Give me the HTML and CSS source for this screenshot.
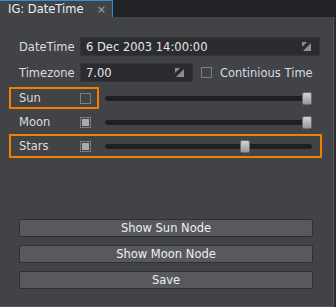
FILE: index.html
```html
<!DOCTYPE html>
<html lang="en">
<head>
  <meta charset="UTF-8">
  <title>IG: DateTime</title>
  <link rel="stylesheet" href="styles.css">
</head>
<body>

  <!-- TAB BAR -->
  <div class="tabbar">
    <div class="tab">
      <span class="tab-title">IG: DateTime</span>
      <span class="tab-close">&times;</span>
    </div>
  </div>

  <div class="panel">
    <div class="row">
      <span class="label">DateTime</span>
      <div class="field wide">
        <span>6 Dec 2003 14:00:00</span>
        <svg class="field-icon" width="9" height="9" viewBox="0 0 9 9">
          <polygon points="0,0 5,0 0,5" fill="#8d8e90"/>
          <polygon points="9,1 9,9 1,9" fill="#8d8e90"/>
        </svg>
      </div>
    </div>

    <div class="row gap-sm">
      <span class="label">Timezone</span>
      <div class="field narrow">
        <span>7.00</span>
        <svg class="field-icon" width="9" height="9" viewBox="0 0 9 9">
          <polygon points="0,0 5,0 0,5" fill="#8d8e90"/>
          <polygon points="9,1 9,9 1,9" fill="#8d8e90"/>
        </svg>
      </div>
      <span class="check"></span>
      <span class="check-text">Continious Time</span>
    </div>

    <div class="row slider-row">
      <div class="lead hl">
        <span class="label">Sun</span>
        <span class="check"></span>
      </div>
      <div class="track"><span class="thumb" style="left:calc(100% - 10px)"></span></div>
    </div>

    <div class="row slider-row">
      <div class="lead">
        <span class="label">Moon</span>
        <span class="check on"></span>
      </div>
      <div class="track"><span class="thumb" style="left:calc(100% - 10px)"></span></div>
    </div>

    <div class="row slider-row hl">
      <div class="lead">
        <span class="label">Stars</span>
        <span class="check on"></span>
      </div>
      <div class="track"><span class="thumb" style="left:135px"></span></div>
    </div>

    <div class="buttons">
      <button class="btn">Show Sun Node</button>
      <button class="btn">Show Moon Node</button>
      <button class="btn">Save</button>
    </div>
  </div>

</body>
</html>
```

FILE: styles.css
```css
* { box-sizing: border-box; }
body {
  margin: 0;
  width: 336px;
  height: 307px;
  background: #2c2d30;
  font-family: "DejaVu Sans", sans-serif;
  font-size: 11.5px;
  color: #dcdcde;
  overflow: hidden;
}

/* tab bar */
.tabbar {
  height: 17px;
  background: #222326;
  display: flex;
}
.tab {
  width: 113px;
  height: 17px;
  background: #424347;
  border-top: 1px solid #2f8fdc;
  border-right: 1px solid #2f8fdc;
  display: flex;
  align-items: center;
  padding-left: 8px;
}
.tab-title { color: #ecedef; }
.tab-close {
  margin-left: auto;
  margin-right: 6px;
  color: #a6a7aa;
  font-size: 11px;
}

/* panel */
.panel {
  width: 334px;
  height: 290px;
  background: #424347;
  border-right: 1px solid #55565a;
  border-bottom: 1px solid #55565a;
  padding-top: 18px;
  display: flex;
  flex-direction: column;
}
.row {
  margin-left: 9px;
  width: 313px;
  height: 23px;
  border: 2px solid transparent;
  padding-left: 8px;
  display: flex;
  align-items: center;
}
.row.gap-sm { margin-top: 3px; margin-bottom: 2px; }
.row.slider-row { height: 24px; }
.hl { border-color: #f27f00 !important; }
.label { width: 61px; flex: none; }

.lead {
  display: flex;
  align-items: center;
  height: 20px;
}
.row .lead.hl {
  border: 2px solid;
  margin: -1px -8px -1px -10px;
  padding: 0 6px 0 8px;
  height: 22px;
}

/* text fields */
.field {
  height: 19px;
  background: #2b2c2f;
  border: 1px solid #343538;
  display: flex;
  align-items: center;
  padding: 0 8px 0 5px;
  color: #e6e7e9;
}
.field.wide { width: 240px; }
.field.narrow { width: 113px; }
.field-icon { margin-left: auto; }

/* checkboxes */
.check {
  width: 11px;
  height: 11px;
  border: 1px solid #7d7e82;
  padding: 1px;
  flex: none;
}
.check.on::after {
  content: "";
  display: block;
  width: 100%;
  height: 100%;
  background: #a9aaad;
}
.field + .check { margin-left: 8px; }
.check-text { margin-left: 8px; color: #d6dbe4; }

/* sliders */
.track {
  position: relative;
  flex: 1;
  height: 5px;
  margin: 0 8px 0 14px;
  background: #1e1f21;
  border-radius: 3px;
}
.thumb {
  position: absolute;
  top: -4px;
  width: 10px;
  height: 13px;
  border-radius: 2px;
  background: linear-gradient(#d2d3d5, #97989b);
  border: 1px solid #6a6b6e;
}

/* buttons */
.buttons {
  margin-top: 61px;
  padding-left: 19px;
  display: flex;
  flex-direction: column;
  gap: 8px;
}
.btn {
  width: 294px;
  height: 18px;
  background: #58595d;
  border: 1px solid #2f3033;
  border-radius: 2px;
  color: #eeeff1;
  font-family: inherit;
  font-size: inherit;
  padding: 0;
}
```
